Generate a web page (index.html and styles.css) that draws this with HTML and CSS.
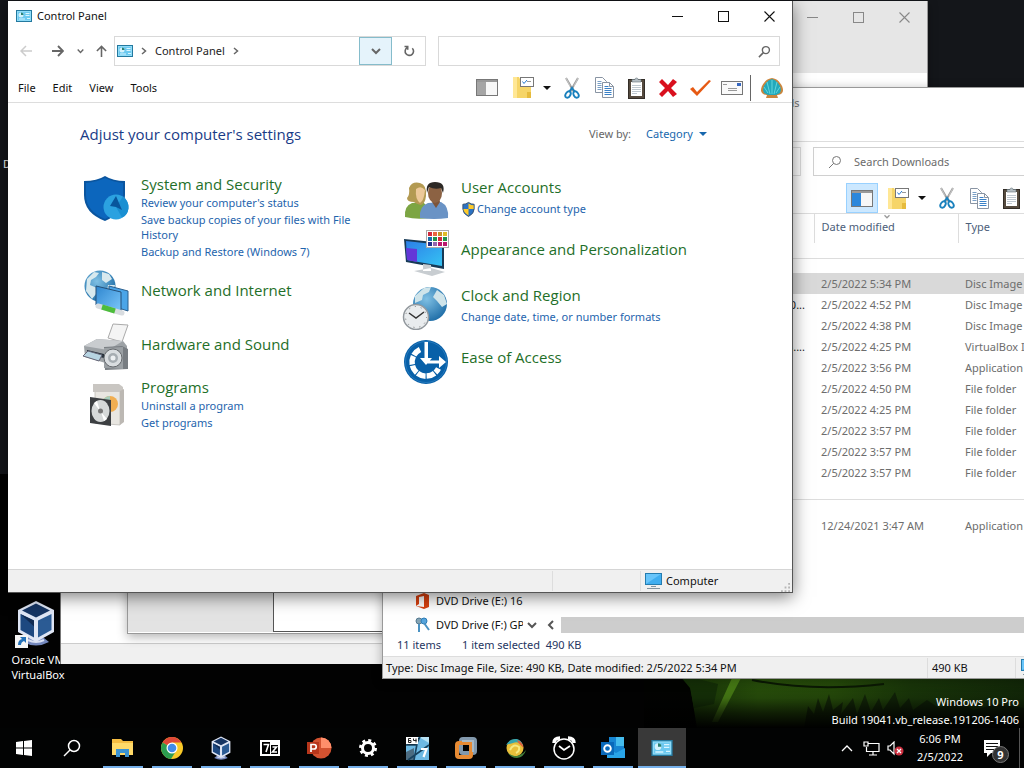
FILE: index.html
```html
<!DOCTYPE html>
<html lang="en">
<head>
<meta charset="utf-8">
<title>Control Panel</title>
<link rel="stylesheet" href="styles.css">
</head>
<body>
<svg class="defs" aria-hidden="true">
  <defs>
    <linearGradient id="gBlue" x1="0" y1="0" x2="1" y2="1"><stop offset="0" stop-color="#2f86cf"/><stop offset="1" stop-color="#7cc8fb"/></linearGradient>
    <linearGradient id="gScreen" x1="0" y1="0" x2="1" y2="1"><stop offset="0" stop-color="#2c7fe8"/><stop offset="1" stop-color="#35c3f3"/></linearGradient>
    <radialGradient id="gGlobe" cx=".4" cy=".35" r=".7"><stop offset="0" stop-color="#7fc0e4"/><stop offset="1" stop-color="#1d6ca6"/></radialGradient>
    <symbol id="i-cpl" viewBox="0 0 16 12"><rect x=".5" y=".5" width="15" height="11" fill="#8fdcf8" stroke="#24799f"/><rect x="2" y="2" width="12" height="8" fill="#6cc9f0"/><circle cx="5" cy="5" r="2.500" fill="#d4f2fc"/><path d="M5 5V2.500A2.500 2.500 0 0 1 7.500 5z" fill="#2a7f70"/><path d="M9.500 3.500h4M9.500 5.500h4M3 9h6M11 8.500h3" stroke="#d8f5ff"/></symbol>
    <symbol id="i-pane" viewBox="0 0 22 17"><rect x=".5" y=".5" width="21" height="16" fill="#f7f7f7" stroke="#777"/><rect x="1" y="1" width="20" height="2" fill="#999"/><rect x="1" y="3" width="9" height="13"/></symbol>
    <symbol id="i-folder" viewBox="0 0 22 23"><path d="M1 1h6l2 4h10v17H1z" fill="#f6d568"/><path d="M1 1h4v21H1z" fill="#ffe795"/><path d="M15 16h4v6h-4z" fill="#e6bb3d"/><rect x="8.500" y="1.500" width="13" height="9" fill="#fff" stroke="#777"/><path d="M10.500 5.500l1.500 2 3-3.500" fill="none" stroke="#2679cf"/><path d="M15 5.500h4" stroke="#999"/></symbol>
    <symbol id="i-cut" viewBox="0 0 16 22"><path d="M2 1l8 14M14 1L6 15" stroke="#9b9b9b" stroke-width="2"/><path d="M2 1l4 8M14 1l-4 8" stroke="#ddd" stroke-width=".7"/><ellipse cx="4" cy="17.500" rx="2.300" ry="3.500" transform="rotate(30 4 17.500)" fill="none" stroke="#1980bd" stroke-width="1.900"/><ellipse cx="12" cy="17.500" rx="2.300" ry="3.500" transform="rotate(-30 12 17.500)" fill="none" stroke="#1980bd" stroke-width="1.900"/><path d="M5 15l3-4 3 4" fill="none" stroke="#1980bd" stroke-width="2"/></symbol>
    <symbol id="i-copy" viewBox="0 0 19 21"><path d="M.5.5h7l4 4v11h-11z" fill="#fff" stroke="#8994a3"/><path d="M2.500 4.500h4M2.500 6.500h4M2.500 8.500h4M2.500 10.500h4M2.500 12.500h4" stroke="#799fc6"/><path d="M7.500 5.500h7l4 4v11h-11z" fill="#fff" stroke="#8994a3"/><path d="M14.500 5.500v4h4" fill="none" stroke="#8994a3"/><path d="M9.500 9.500h4M9.500 11.500h7M9.500 13.500h7M9.500 15.500h7M9.500 17.500h7" stroke="#3a81c7"/></symbol>
    <symbol id="i-paste" viewBox="0 0 17 22"><rect x=".5" y="2.500" width="16" height="19" fill="#554a3e" stroke="#332d27"/><rect x="3" y="5" width="11" height="14" fill="#fff"/><path d="M4 8.500h9M4 10.500h9M4 12.500h9M4 14.500h9M4 16.500h5" stroke="#bfc8d0"/><path d="M4 5V2.500h3a1.500 1.500 0 0 1 3 0h3V5z" fill="#b5bec4" stroke="#65737a" stroke-width=".6"/></symbol>
    <symbol id="i-pc" viewBox="0 0 17 16"><rect x=".5" y=".5" width="16" height="11" fill="#40aef0" stroke="#247caf"/><path d="M1 1h15L1 11z" fill="#68c5fa"/><path d="M6 13.500h5M2 15.500h13" stroke="#8294a0"/></symbol>
    <symbol id="i-search" viewBox="0 0 14 14"><circle cx="8.500" cy="5.500" r="3.800" fill="none" stroke="currentColor" stroke-width="1.500"/><path d="M5.800 8.200L1 13" stroke="currentColor" stroke-width="1.700"/></symbol>
    <symbol id="i-search-thin" viewBox="0 0 14 14"><circle cx="8.500" cy="5.500" r="4" fill="none" stroke="currentColor"/><path d="M5.700 8.300L1 13" stroke="currentColor"/></symbol>
    <symbol id="i-chev" viewBox="0 0 10 8"><path d="M1 2l4 4 4-4" fill="none" stroke="currentColor" stroke-width="2"/></symbol>
    <symbol id="i-right" viewBox="0 0 6 8"><path d="M1 1l3.500 3L1 7" fill="none" stroke="currentColor" stroke-width="1.500"/></symbol>
    <symbol id="i-min" viewBox="0 0 11 11"><path d="M0 5.500h11" stroke="currentColor"/></symbol>
    <symbol id="i-max" viewBox="0 0 11 11"><rect x=".5" y=".5" width="10" height="10" fill="none" stroke="currentColor"/></symbol>
    <symbol id="i-close" viewBox="0 0 11 11"><path d="M.5.5l10 10M10.500.5l-10 10" stroke="currentColor" stroke-width="1.100"/></symbol>
    <symbol id="i-vbox" viewBox="0 0 40 46"><path d="M12 38q8-5 16 0l5 4q-13 7-26 0z" fill="#7488bd"/><path d="M12 40q8 4 16 0" fill="none" stroke="#d9e0f2" stroke-width="2"/><path d="M20 1L38 10v22L20 42 2 32V10z" fill="#dfe6f5"/><path d="M20 3.500L34 10.500 20 17.500 6 10.500z" fill="#163563"/><path d="M4.500 14l13.500 6.500v17L4.500 30z" fill="#1d4880"/><path d="M35.500 14L22 20.500v17L35.500 30z" fill="#2b5b94"/><path d="M4.500 14l13.500 6.500v6z" fill="#102a52"/></symbol>
  </defs>
</svg>

<main class="desktop">
  <svg class="wallpaper" viewBox="0 0 380 60" preserveAspectRatio="none" aria-hidden="true">
    <defs>
      <linearGradient id="gGrass" x1="0" x2="1"><stop offset="0" stop-color="#000"/><stop offset=".1" stop-color="#1c3c08"/><stop offset=".3" stop-color="#2c570c"/><stop offset=".5" stop-color="#2a530b"/><stop offset=".7" stop-color="#1c3c0a"/><stop offset="1" stop-color="#142c09"/></linearGradient>
      <linearGradient id="gFade" x1="0" y1="0" x2="0" y2="1"><stop offset="0" stop-color="#000" stop-opacity="0"/><stop offset=".5" stop-color="#000" stop-opacity=".2"/><stop offset=".75" stop-color="#000" stop-opacity=".65"/><stop offset="1" stop-color="#000"/></linearGradient>
    </defs>
    <rect width="380" height="60" fill="url(#gGrass)"/>
    <path d="M0 0h36l10 16 3 20 4 24H0z" fill="#020301"/>
    <path d="M36 8q8 0 22 4l16 4-4 20-20 4-4-20z" fill="#173508"/>
    <path d="M88 10h9L74 54h-6z" fill="#4f8a17"/>
    <path d="M108 12q60 12 132 4" fill="none" stroke="#0c1c04" stroke-width="2"/>
    <path d="M160 60l4-22 6 8 4-16 5 14 6-18 4 16 10-8-2 12 12-16 4 16 8-20 6 18 8-14 4 12 12-18 5 16 9-10 4 12 14-10 12 8 20-8 14 10 24-6 27 4v20z" fill="#0a1406" opacity=".6"/>
    <rect width="380" height="60" fill="url(#gFade)"/>
  </svg>
  <span class="desk-clip">D</span>
  <a class="shortcut" href="#vbox">
    <svg class="shortcut-icon" viewBox="0 0 42 48"><use href="#i-vbox" x="1" width="40" height="46"/><rect x="0" y="35" width="13" height="13" fill="#f5f5f5"/><path d="M3 45q0-5 4-6l-2-2h6v6l-2-2q-3 1-3 4z" fill="#2471b8"/></svg>
    <span>Oracle VM VirtualBox</span>
  </a>
  <p class="build">Windows 10 Pro<br>Build 19041.vb_release.191206-1406</p>

  <section class="window win-blank"><div class="blank-body"></div><div class="blank-status"></div></section>

  <section class="window win-gray">
    <div class="gray-title">
      <button aria-label="Minimize"><svg><use href="#i-min"/></svg></button><button aria-label="Maximize"><svg><use href="#i-max"/></svg></button><button aria-label="Close"><svg><use href="#i-close"/></svg></button>
    </div>
    <div class="gray-body"><div class="gray-side"></div><div class="gray-main"></div></div>
  </section>

  <section class="window win-explorer">
    <header class="ex-title"><span>Downloads</span></header>
    <div class="ex-address"><div class="ex-path"></div><label class="ex-search"><svg><use href="#i-search-thin"/></svg><input type="text" placeholder="Search Downloads" aria-label="Search Downloads"></label></div>
    <div class="ex-tools">
      <button class="on" aria-label="Navigation pane"><svg class="ic-pane blue"><use href="#i-pane"/></svg></button>
      <button class="tool-folder" aria-label="Folder options"><svg class="ic-folder"><use href="#i-folder"/></svg><i class="caret"></i></button>
      <button aria-label="Cut"><svg class="ic-cut"><use href="#i-cut"/></svg></button>
      <button aria-label="Copy"><svg class="ic-copy"><use href="#i-copy"/></svg></button>
      <button aria-label="Paste"><svg class="ic-paste"><use href="#i-paste"/></svg></button>
    </div>
    <div class="ex-body">
      <nav class="ex-nav">
        <div class="ex-tree">
          <a href="#e"><svg viewBox="0 0 15 16"><path d="M1 3l8-3 5 2v12l-5 2-8-3 8 1V3L4 4v7l-3 2z" fill="#d9400f"/></svg><span>DVD Drive (E:) 16.0</span></a>
          <a href="#f"><svg viewBox="0 0 15 16"><circle cx="4" cy="4" r="3" fill="#86a5b5" stroke="#557a91"/><circle cx="9" cy="4" r="3" fill="#56a5dd" stroke="#2d7db7"/><path d="M4 7v8M9 6l5 7" stroke="#4a92c3" stroke-width="2"/></svg><span>DVD Drive (F:) GParted</span></a>
        </div>
        <button class="ex-down" aria-label="Scroll down"><svg><use href="#i-chev"/></svg></button>
      </nav>
      <div class="ex-files">
        <table>
          <colgroup><col class="c-name"><col class="c-date"><col class="c-type"></colgroup>
          <thead><tr><th></th><th><svg class="sort"><use href="#i-chev"/></svg>Date modified</th><th>Type</th></tr></thead>
          <tbody>
            <tr class="group"><td colspan="3"><hr></td></tr>
            <tr class="sel"><td></td><td>2/5/2022 5:34 PM</td><td>Disc Image File</td></tr>
            <tr><td>0...</td><td>2/5/2022 4:52 PM</td><td>Disc Image File</td></tr>
            <tr><td></td><td>2/5/2022 4:38 PM</td><td>Disc Image File</td></tr>
            <tr><td>5....</td><td>2/5/2022 4:25 PM</td><td>VirtualBox Image</td></tr>
            <tr><td></td><td>2/5/2022 3:56 PM</td><td>Application</td></tr>
            <tr><td></td><td>2/5/2022 4:50 PM</td><td>File folder</td></tr>
            <tr><td></td><td>2/5/2022 4:25 PM</td><td>File folder</td></tr>
            <tr><td></td><td>2/5/2022 3:57 PM</td><td>File folder</td></tr>
            <tr><td></td><td>2/5/2022 3:57 PM</td><td>File folder</td></tr>
            <tr><td></td><td>2/5/2022 3:57 PM</td><td>File folder</td></tr>
            <tr class="group later"><td colspan="3"><hr></td></tr>
            <tr><td></td><td>12/24/2021 3:47 AM</td><td>Application</td></tr>
          </tbody>
        </table>
        <div class="ex-scroll"><button aria-label="Scroll left"><svg><use href="#i-chev"/></svg></button><div class="thumb"></div></div>
      </div>
    </div>
    <div class="ex-count"><span>11 items</span><span>1 item selected&nbsp; 490 KB</span></div>
    <footer class="ex-status"><span class="grow">Type: Disc Image File, Size: 490 KB, Date modified: 2/5/2022 5:34 PM</span><span class="size">490 KB</span><span class="zone"><svg><use href="#i-pc"/></svg></span></footer>
  </section>

  <section class="window win-cpl">
    <header class="cp-title">
      <svg class="ic-cpl"><use href="#i-cpl"/></svg><span>Control Panel</span>
      <div class="caption"><button aria-label="Minimize"><svg><use href="#i-min"/></svg></button><button aria-label="Maximize"><svg><use href="#i-max"/></svg></button><button aria-label="Close"><svg><use href="#i-close"/></svg></button></div>
    </header>
    <div class="cp-nav">
      <div class="arrows">
        <button class="back" aria-label="Back"><svg viewBox="0 0 13 12"><path d="M6 1L1 6l5 5M1 6h11" fill="none" stroke="currentColor" stroke-width="1.500"/></svg></button>
        <button class="forward" aria-label="Forward"><svg viewBox="0 0 13 12"><path d="M7 1l5 5-5 5M12 6H1" fill="none" stroke="currentColor" stroke-width="1.900"/></svg></button>
        <button class="recent" aria-label="Recent locations"><svg><use href="#i-chev"/></svg></button>
        <button class="up" aria-label="Up"><svg viewBox="0 0 12 13"><path d="M1 6.500l5-5 5 5M6 1.500V13" fill="none" stroke="currentColor" stroke-width="1.700"/></svg></button>
      </div>
      <div class="path">
        <svg class="ic-cpl"><use href="#i-cpl"/></svg><svg class="crumb"><use href="#i-right"/></svg><a href="#cp">Control Panel</a><svg class="crumb"><use href="#i-right"/></svg>
        <button class="drop" aria-label="Previous locations"><svg><use href="#i-chev"/></svg></button>
        <button class="refresh" aria-label="Refresh"><svg viewBox="0 0 12 12"><path d="M9.300 3.200A4.200 4.200 0 1 1 4 2.700M1.500 1.500h3.200v3.200" fill="none" stroke="currentColor" stroke-width="1.600"/></svg></button>
      </div>
      <label class="search"><input type="text" aria-label="Search Control Panel"><svg><use href="#i-search"/></svg></label>
    </div>
    <div class="cp-menu">
      <button>File</button><button>Edit</button><button>View</button><button>Tools</button>
      <div class="cp-tools">
        <button aria-label="Navigation pane"><svg class="ic-pane"><use href="#i-pane"/></svg></button>
        <button class="tool-folder" aria-label="Folder options"><svg class="ic-folder"><use href="#i-folder"/></svg><i class="caret"></i></button>
        <button aria-label="Cut"><svg class="ic-cut"><use href="#i-cut"/></svg></button>
        <button aria-label="Copy"><svg class="ic-copy"><use href="#i-copy"/></svg></button>
        <button aria-label="Paste"><svg class="ic-paste"><use href="#i-paste"/></svg></button>
        <button aria-label="Delete"><svg class="ic-20" viewBox="0 0 20 20"><path d="M4 1l6 6 5-6 4 3-6 6 6 6-4 3-5-6-6 6-3-3 6-6-6-6z" fill="#d9101e"/></svg></button>
        <button aria-label="Properties"><svg class="ic-22" viewBox="0 0 22 18"><path d="M1 10l3-2 4 5L20 1l2 1L8 17z" fill="#e65a14"/></svg></button>
        <button aria-label="Rename"><svg class="ic-22" viewBox="0 0 22 18"><rect x=".5" y="2.500" width="21" height="13" fill="#fafafa" stroke="#777"/><path d="M2 5.500h4M7 9.500h9M7 11.500h9" stroke="#999"/><path d="M16 4h4v3h-4z" fill="#3868c0"/></svg></button>
        <button class="shell" aria-label="Classic Shell"><svg viewBox="0 0 24 22"><path d="M6 21l1-3q-5 0-6-4 0-5 3-8 2-4 8-5 6 1 8 5 3 3 3 8-1 4-6 4l1 3z" fill="#cb853d"/><path d="M8 18l-4-2-1-3q0-4 3-7 2-3 6-4 4 1 6 4 3 3 3 7l-1 3-4 2z" fill="#22a9bb"/><path d="M12 17V3M10 17L7 5M14 17l3-12M8 16L4 10M16 16l4-6" stroke="#62d6de"/></svg></button>
      </div>
    </div>
    <div class="cp-content">
      <div class="cp-head"><h1>Adjust your computer's settings</h1><div class="viewby"><span>View by:</span><button>Category <i class="caret"></i></button></div></div>
      <div class="cats">
        <div class="col">
          <article class="cat top">
            <svg viewBox="0 0 48 48"><path d="M23 2q8 5 20 5v14q0 17-20 26Q2 39 2 21V7q13 0 21-5z" fill="#0a559f"/><path d="M23 4q8 4 18 5v12q0 15-18 24Q4 37 4 21V9q11-1 19-5z" fill="#0c66bd"/><circle cx="34" cy="33" r="12.500" fill="#2ba1e0"/><path d="M34 33L41 22.500q6 5 5.500 12 -1 7-6.500 9z" fill="#198fd2"/><path d="M34 33l-6-1 6-10 6 14z" fill="#08559c"/></svg>
            <div><h2><a href="#sys">System and Security</a></h2><a href="#r">Review your computer's status</a><a href="#b">Save backup copies of your files with File History</a><a href="#w">Backup and Restore (Windows 7)</a></div>
          </article>
          <article class="cat">
            <svg viewBox="0 0 48 48"><circle cx="18" cy="17" r="15.500" fill="url(#gGlobe)"/><path d="M5 10l7-7 5 1-3 4-5 3-1 5 7 3-1 6-4 5-6-8zM20 3l7 2 3 5-6 4-4-3zM26 16l7 0-2 8-6-2z" fill="#d8e9ee"/><path d="M27 17l19 5v20l-19-6z" fill="#4ba5e8" stroke="#2b5f8d"/><path d="M14 17l25 6v20l-25-7z" fill="url(#gBlue)" stroke="#244f77"/><path d="M16 37l24 7" stroke="#d8dce0" stroke-width="5" stroke-linecap="round"/><path d="M20 38l13 4" stroke="#4dbd3c" stroke-width="5"/></svg>
            <div><h2><a href="#net">Network and Internet</a></h2></div>
          </article>
          <article class="cat">
            <svg viewBox="0 0 48 48"><path d="M26 15l5-14 15 1-6 17z" fill="#f4f4f4" stroke="#aaa"/><path d="M2 23l13-7 26 2 4 5v13l-18 5-24-7z" fill="#9da2a6"/><path d="M2 23l13-7 26 2-15 9z" fill="#c9cccf"/><path d="M5 27l17 4v4L5 31z" fill="#26313b"/><path d="M1 33l5-5 14 4-3 6z" fill="#b7d4e2" stroke="#667"/><path d="M22 24l18-1 6 3v20l-23 1z" fill="#787d82"/><path d="M22 25l19-1v22l-19-1z" fill="#9ba0a4"/><circle cx="31" cy="35" r="9" fill="#d9dde0" stroke="#65696d"/><circle cx="31" cy="35" r="5" fill="#a6adb2"/><circle cx="31" cy="35" r="2.500" fill="#edf0f2"/></svg>
            <div><h2><a href="#hw">Hardware and Sound</a></h2></div>
          </article>
          <article class="cat">
            <svg viewBox="0 0 48 48"><path d="M13 2l25 2v37l-25-2z" fill="#e8e6e1" stroke="#b8b5b0" stroke-width=".7"/><path d="M11 0h26l4 3v5H11z" fill="#c9c6c2"/><path d="M38 7l4-2v33l-4 3z" fill="#bcb8b3"/><circle cx="28" cy="20" r="8" fill="#f0ae51"/><path d="M28 20v-8a8 8 0 0 0-8 8z" fill="#a7cdbb"/><path d="M8 13l21 3v26L8 39z" fill="#3c3f42"/><ellipse cx="18.500" cy="27" rx="9" ry="11" fill="#d6d9d9"/><path d="M18 27l-6-8 3-2zM19 28l6 7-3 2z" fill="#fff"/><circle cx="18.500" cy="27" r="2.500" fill="#777"/></svg>
            <div><h2><a href="#prog">Programs</a></h2><a href="#u">Uninstall a program</a><a href="#g">Get programs</a></div>
          </article>
        </div>
        <div class="col">
          <article class="cat">
            <svg viewBox="0 0 48 48"><path d="M3 43q-1-11 7-14l11-1q6 5 6 16-12 2-24-1z" fill="#7ca543"/><path d="M7 14q3-7 11-5 7 2 6 13-1 8-5 9-5-1-7-3-7 0-7-4 3-3 2-10z" fill="#b39a52"/><path d="M14 15q5-4 9 1-1 11-5 13-5-4-4-14z" fill="#edc99a"/><path d="M18 44q-1-12 8-15l13-1q8 4 7 16-14 2-28 0z" fill="#6a93c5"/><path d="M30 28l4 6 4-6-1-4h-6z" fill="#7d5439"/><ellipse cx="33" cy="19" rx="7" ry="10" fill="#8c6243"/><path d="M25 19Q23 8 33 8q11 0 8 11l-2-5q-6 2-12-1z" fill="#2c2825"/></svg>
            <div class="pair"><h2><a href="#user">User Accounts</a></h2><a class="with-icon" href="#act"><svg viewBox="0 0 16 16"><path d="M8 1q3 2 6 2v5q0 5-6 8-6-3-6-8V3q3 0 6-2z" fill="#2b72c4" stroke="#39506c"/><path d="M8 2q3 2 5.500 2v4H8zM2.500 8H8v7q-5-3-5.500-7z" fill="#ffca28"/></svg>Change account type</a></div>
          </article>
          <article class="cat">
            <svg viewBox="0 0 48 48"><path d="M2 11l40 4v26L4 34z" fill="#173a56"/><path d="M4 13l36 4v21L5 32z" fill="url(#gScreen)"/><path d="M4 20l11 1v13L5 32z" fill="#6437d7"/><path d="M21 36l8 1v6h-8zM12 43l18 5 13-4-14-4z" fill="#c8cdd1"/><rect x="24.500" y="2.500" width="22" height="17" fill="#fff" stroke="#aaa"/><path d="M26 4h4v4h-4zM36 9h4v4h-4z" fill="#d12a3d"/><path d="M31 4h4v4h-4z" fill="#eb6640"/><path d="M36 4h4v4h-4z" fill="#c49425"/><path d="M41 4h4v4h-4z" fill="#e0bc27"/><path d="M26 9h4v4h-4z" fill="#176fab"/><path d="M31 9h4v4h-4zM41 9h4v4h-4z" fill="#20914b"/><path d="M26 14h4v4h-4z" fill="#20308c"/><path d="M31 14h4v4h-4z" fill="#9365af"/><path d="M36 14h4v4h-4zM41 14h4v4h-4z" fill="#ba176c"/></svg>
            <div><h2><a href="#app">Appearance and Personalization</a></h2></div>
          </article>
          <article class="cat">
            <svg viewBox="0 0 48 48"><circle cx="28" cy="22" r="17" fill="url(#gGlobe)"/><path d="M13 14l9-8 7-1-2 5-6 3-1 5-7 3zM35 8l7 5 3 9-5 3-5-6-4-4z" fill="#cfe4ea"/><circle cx="14" cy="35" r="12.500" fill="#e9ecee" stroke="#92989d" stroke-width="1.500"/><circle cx="14" cy="35" r="10.500" fill="none" stroke="#777" stroke-dasharray="1 5"/><path d="M7 31l7 5 8-6" fill="none" stroke="#333" stroke-width="1.500"/></svg>
            <div class="pair"><h2><a href="#clock">Clock and Region</a></h2><a href="#date">Change date, time, or number formats</a></div>
          </article>
          <article class="cat">
            <svg viewBox="0 0 48 48"><circle cx="24" cy="26" r="22" fill="#0860a8"/><circle cx="24" cy="26" r="20.500" fill="none" stroke="#2f83c4" stroke-width=".7"/><path d="M18 13.500A14 14 0 1 0 36.500 32.500" fill="none" stroke="#fff" stroke-width="5.500" stroke-dasharray="8.500 1"/><path d="M22.500 6h3.500v16h4l-6 7-6-7h4.500zM27 24.500h10V20l7 6-7 6v-4.500H25z" fill="#fff"/></svg>
            <div><h2><a href="#ease">Ease of Access</a></h2></div>
          </article>
        </div>
      </div>
    </div>
    <footer class="cp-status"><span class="grow"></span><span class="mid"></span><span class="zone"><svg class="ic-pc"><use href="#i-pc"/></svg>Computer</span><svg class="grip" viewBox="0 0 10 10"><path d="M8 0h2v2H8zM4 4h2v2H4zM8 4h2v2H8zM0 8h2v2H0zM4 8h2v2H4zM8 8h2v2H8z" fill="#b5b5b5"/></svg></footer>
  </section>
</main>

<footer class="taskbar">
  <button aria-label="Start"><svg viewBox="0 0 24 24"><path d="M4 6l7-1v6.500H4zM12 5l8-1v7.500h-8zM4 12.500h7V19l-7-1zM12 12.500h8V20l-8-1z" fill="#fff"/></svg></button>
  <button aria-label="Search"><svg viewBox="0 0 24 24"><circle cx="14" cy="10" r="5.500" fill="none" stroke="#fff" stroke-width="1.500"/><path d="M10 14l-6 6" stroke="#fff" stroke-width="1.500"/></svg></button>
  <div class="apps">
    <button class="run" aria-label="File Explorer"><svg viewBox="0 0 24 24"><path d="M1 3h9l2 2h10v13H1z" fill="#f5bd42"/><path d="M1 7h21v12H1z" fill="#ffda69"/><path d="M5 13h13v8h-4v-4H9v4H5z" fill="#3b93d3"/></svg></button>
    <button class="run" aria-label="Chrome"><svg viewBox="0 0 24 24"><circle cx="12" cy="12" r="11" fill="#f9c928"/><path d="M12 12L2.500 6.500A11 11 0 0 1 21.500 6.500H12z" fill="#df4838"/><path d="M2.500 6.500A11 11 0 0 0 11 23l5-8-4-3z" fill="#2c9d50"/><circle cx="12" cy="12" r="5.500" fill="#fff"/><circle cx="12" cy="12" r="4.300" fill="#428be8"/></svg></button>
    <button class="run" aria-label="VirtualBox"><svg viewBox="0 0 24 24"><use href="#i-vbox" width="24" height="24"/></svg></button>
    <button class="run" aria-label="7-Zip"><svg viewBox="0 0 24 24"><path d="M2 4h20v16H2z" fill="#fff"/><path d="M4 6h8v12H4zM13 9h7v9h-7z" fill="#000"/><path d="M5.500 8.500h5L8 16M14.500 11h4l-4 5h4.500" fill="none" stroke="#fff" stroke-width="1.600"/></svg></button>
    <button class="run" aria-label="PowerPoint"><svg viewBox="0 0 24 24"><circle cx="14" cy="12" r="10.500" fill="#d35230"/><path d="M14 1.500A10.500 10.500 0 0 1 24.500 12H14z" fill="#ff8f6b"/><rect y="6" width="12" height="12" fill="#b7361b"/><path d="M4 16V8.500h3a2 2 0 0 1 0 4.500H4" fill="none" stroke="#fff" stroke-width="1.700"/></svg></button>
    <button class="run" aria-label="Settings"><svg viewBox="0 0 24 24"><circle cx="12" cy="12" r="5.500" fill="none" stroke="#fff" stroke-width="3"/><circle cx="12" cy="12" r="7.500" fill="none" stroke="#fff" stroke-width="3" stroke-dasharray="2.900 2.990"/></svg></button>
    <button class="run" aria-label="Registry tool"><svg viewBox="0 0 24 24"><path d="M1 1h23v23H1z" fill="#6db9e3"/><path d="M14 1h10v6z" fill="#b8e3f5"/><path d="M1 24v-8l8-4v12z" fill="#4b6b80"/><path d="M1 9l10 0 4-8M3 24l21-15M12 8l-3 16" stroke="#17425e" stroke-width="1.600"/><path d="M1 1h12v7H1z" fill="#fff"/><path d="M6 2.500H3.500v4H6V4.500H4M8.500 2.500v2h3M11 2.500v4" fill="none" stroke="#222"/><path d="M16 13h5.500l-3 8" fill="none" stroke="#fff" stroke-width="2.200"/></svg></button>
    <button class="run" aria-label="VMware"><svg viewBox="0 0 24 24"><rect x="7" y="3" width="14" height="14" rx="2" fill="none" stroke="#8299ad" stroke-width="4"/><rect x="3" y="7" width="14" height="14" rx="2" fill="none" stroke="#e78b34" stroke-width="4"/><path d="M8 5h11v11" fill="none" stroke="#a9bac6" stroke-width="2"/></svg></button>
    <button class="run" aria-label="Media app"><svg viewBox="0 0 24 24"><circle cx="12" cy="12" r="8.500" fill="#e8bf3a"/><path d="M3 9q4-7 11-6 4 1 6 6-5-4-10-2-4 1-7 2z" fill="#36a5ae"/><path d="M14 4q6 2 6.500 8l-5-5z" fill="#df603d"/><path d="M5 17q6 5 12 2 4-2 6-5-2 7-9 8-6 0-9-5z" fill="#45803b"/><path d="M7 14q3-7 9-3 1 4-3 6" fill="none" stroke="#f6e982" stroke-width="2"/></svg></button>
    <button class="run" aria-label="Alarms &amp; Clock"><svg viewBox="0 0 24 24"><path d="M2 7q0-5 6-5M22 7q0-5-6-5" fill="none" stroke="#fff" stroke-width="3.500"/><circle cx="12" cy="13" r="10" fill="#000" stroke="#fff" stroke-width="1.500"/><path d="M7 10l5 4 6-4" fill="none" stroke="#fff" stroke-width="1.800"/></svg></button>
    <button class="run" aria-label="Outlook"><svg viewBox="0 0 24 24"><rect x="8" y="1" width="15" height="18" fill="#1685d2"/><path d="M15 1h8v9h-8z" fill="#45bdee"/><path d="M6 12l9 5 9-5v10H6z" fill="#29a4e8"/><rect y="6" width="13" height="13" fill="#0969ba"/><circle cx="6.500" cy="12.500" r="3.300" fill="none" stroke="#fff" stroke-width="1.900"/></svg></button>
    <button class="run active" aria-label="Control Panel"><svg viewBox="0 0 24 24"><use href="#i-cpl" x="1" y="4" width="22" height="16"/></svg></button>
  </div>
  <div class="tray">
    <button aria-label="Show hidden icons"><svg viewBox="0 0 12 8"><path d="M1 7l5-5 5 5" fill="none" stroke="#fff" stroke-width="1.300"/></svg></button>
    <button aria-label="Network"><svg class="net" viewBox="0 0 17 15"><path d="M5 2.500h11v8H3.500V6M10 11v3M6 14h8M1 1h4v4H1z" fill="none" stroke="#fff" stroke-width="1.200"/></svg></button>
    <button aria-label="Volume muted"><svg class="vol" viewBox="0 0 17 15"><path d="M1 5h2l4-4v12L3 9H1z" fill="none" stroke="#fff" stroke-width="1.200"/><circle cx="12" cy="10" r="4.500" fill="#cd3040"/><path d="M10 8l4 4M14 8l-4 4" stroke="#fff" stroke-width="1.300"/></svg></button>
    <button class="clock">6:06 PM<br>2/5/2022</button>
    <button class="note" aria-label="Notifications"><svg viewBox="0 0 20 18"><path d="M1 1h16v13H8l-4 4v-4H1z" fill="#fff"/><path d="M3 4.500h12M3 7.500h12M3 10.500h8" stroke="#111"/></svg><b>9</b></button>
    <i class="show-desktop"></i>
  </div>
</footer>
</body>
</html>
```
FILE: styles.css
```css
* { box-sizing: border-box; }
html, body { height: 100%; }
body {
  margin: 0;
  display: flex;
  flex-direction: column;
  overflow: hidden;
  background: #000;
  font: 11px/16px "Noto Sans", "Open Sans", sans-serif;
  color: #111;
}
button { margin: 0; padding: 0; border: 0; background: none; font: inherit; color: inherit; display: flex; align-items: center; justify-content: center; }
input { border: 0; outline: 0; padding: 0; background: none; font: inherit; min-width: 0; flex: 1; }
a { color: inherit; text-decoration: none; }
svg { display: block; flex: none; }
h1, h2, p { margin: 0; font-weight: 400; }
.defs { position: absolute; width: 0; height: 0; }
.grow { flex: 1; }

/* Desktop */
.desktop { position: relative; flex: 1; overflow: hidden; background: linear-gradient(#14161a 0 474px, #020202 474px); }
.wallpaper { position: absolute; right: 0; bottom: 0; width: 380px; height: 60px; }
.desk-clip { position: absolute; left: 3px; top: 156px; color: #fff; }
.shortcut { position: absolute; left: 8px; bottom: 46px; width: 60px; color: #fff; line-height: 15px; display: flex; flex-direction: column; gap: 4px; text-align: center; }
.shortcut-icon { width: 42px; height: 48px; margin-left: 7px; }
.build { position: absolute; right: 5px; bottom: -1px; color: #fff; text-align: right; line-height: 18px; }

.window { position: absolute; display: flex; flex-direction: column; overflow: hidden; background: #fff; }

.win-blank { left: 60px; right: 420px; top: 120px; bottom: 64px; border-left: 1px solid #777; }
.blank-body { flex: 1; }
.blank-status { height: 21px; background: #f0f0f0; border-top: 1px solid #ccc; }

.win-gray { left: 127px; right: 96px; top: 1px; bottom: 94px; border: 1px solid #999; border-top: 0; box-shadow: 0 3px 10px rgba(0,0,0,.3); }
.gray-title { height: 72px; background: #e6e6e6; display: flex; justify-content: flex-end; align-items: flex-start; color: #888; padding-top: 10px; }
.gray-title button { width: 46px; height: 12px; }
.gray-title svg, .caption svg { width: 11px; height: 11px; }
.gray-body { flex: 1; display: flex; padding-bottom: 1px; }
.gray-side { width: 145px; background: #e3e3e3; }
.gray-main { flex: 1; border: 1px solid #555; border-top: 0; border-right: 0; }

/* Explorer */
.win-explorer { left: 382px; right: -60px; top: 87px; bottom: 49px; border: 1px solid #999; box-shadow: 0 2px 10px rgba(0,0,0,.3); }
.ex-title { height: 54px; border-bottom: 1px solid #ddd; color: #777; padding: 7px 0 0 359px; }
.ex-address { height: 39px; display: flex; gap: 12px; padding: 5px 0 5px 200px; }
.ex-path { flex: 0 1 218px; border: 1px solid #ddd; background: #fff; }
.ex-search { flex: 1; display: flex; align-items: center; gap: 12px; padding-left: 14px; border: 1px solid #d0d0d0; color: #777; }
.ex-search svg { width: 14px; height: 14px; }
.ex-search input::placeholder { color: #6b6b6b; opacity: 1; }
.ex-tools { height: 33px; display: flex; align-items: center; padding: 2px 0 0 463px; border-bottom: 1px solid #ddd; }
.ex-tools button { width: 32px; height: 30px; }
.ex-tools .tool-folder, .cp-tools .tool-folder { width: 53px; padding-left: 4px; }
.ex-tools .on { background: #cce8ff; border: 1px solid #99d1ff; }
.ic-pane { width: 22px; height: 17px; fill: #a5a5a5; }
.ic-pane.blue { fill: #2b87dc; }
.ic-folder { width: 22px; height: 23px; }
.ic-cut { width: 16px; height: 22px; }
.ic-copy { width: 19px; height: 21px; }
.ic-paste { width: 17px; height: 22px; }
.caret { border: 4px solid transparent; border-top-color: currentColor; border-bottom: 0; }
.tool-folder { gap: 9px; }
.ex-body { flex: 1; display: flex; min-height: 0; }
.ex-nav { width: 157px; display: flex; align-items: flex-end; }
.ex-tree { flex: 1; min-width: 0; padding-left: 32px; display: flex; flex-direction: column; gap: 8px; }
.ex-tree a { display: flex; gap: 6px; height: 16px; align-items: center; }
.ex-tree svg { width: 15px; height: 16px; }
.ex-tree span { flex: 1; overflow: hidden; white-space: nowrap; }
.ex-down { width: 17px; height: 17px; color: #555; }
.ex-down svg { width: 10px; height: 8px; }
.ex-files { flex: 1; display: flex; flex-direction: column; justify-content: space-between; min-width: 0; padding-left: 1px; }
table { table-layout: fixed; width: 100%; border-collapse: collapse; color: #6d6d6d; }
.c-name { width: 273px; }
.c-date { width: 144px; }
th, td { padding: 0 0 0 7px; text-align: left; font-weight: 400; white-space: nowrap; overflow: hidden; }
th { height: 29px; padding-bottom: 3px; border-right: 1px solid #ddd; color: #4c607a; position: relative; }
.sort { position: absolute; left: 68px; top: 0; width: 8px; height: 5px; color: #999; }
td { height: 21px; line-height: 20px; }
td:first-child { text-align: right; padding-right: 9px; color: #222; }
.group td { height: 30px; padding: 0; }
.group.later td { height: 32px; }
hr { margin: 0; border: 0; border-top: 1px solid #ddd; }
.sel { background: #d9d9d9; }
.ex-scroll { height: 16px; display: flex; color: #555; }
.ex-scroll button { width: 20px; }
.ex-scroll svg { width: 10px; height: 8px; transform: rotate(90deg); }
.thumb { flex: 1; background: #cdcdcd; }
.ex-count { height: 23px; display: flex; align-items: center; gap: 21px; padding-left: 14px; color: #26365f; }
.ex-status { height: 22px; display: flex; align-items: center; background: #f0f0f0; border-top: 1px solid #ddd; padding-left: 3px; }
.ex-status span { height: 20px; line-height: 20px; }
.ex-status .size { width: 88px; border-left: 1px solid #ddd; padding-left: 4px; }
.ex-status .zone { width: 68px; border-left: 1px solid #ddd; padding: 1px 0 0 5px; }
.ex-status svg { width: 17px; height: 16px; }

/* Control Panel */
.win-cpl { left: 8px; right: 231px; top: 1px; bottom: 135px; border: 1px solid #555; border-width: 0 1px 1px 0; box-shadow: 0 4px 16px rgba(0,0,0,.5); }
.cp-title { height: 30px; display: flex; align-items: center; padding-left: 8px; gap: 5px; }
.ic-cpl { width: 16px; height: 12px; }
.caption { margin-left: auto; display: flex; }
.caption button { width: 46px; height: 30px; }
.cp-nav { height: 40px; display: flex; padding: 5px 12px; color: #666; }
.arrows { display: flex; width: 94px; }
.arrows button { justify-content: flex-start; }
.arrows svg { width: 13px; height: 12px; }
.arrows .back { width: 31px; color: #ccc; }
.arrows .forward { width: 26px; }
.arrows .recent { width: 18px; }
.arrows .recent svg { width: 7px; height: 6px; }
.path { flex: 1; display: flex; align-items: center; margin-right: 12px; border: 1px solid #d9d9d9; color: #222; padding-left: 2px; }
.crumb { width: 6px; height: 8px; margin: 0 8px; color: #666; }
.drop { width: 33px; height: 28px; margin-left: auto; background: #e5f3fb; border: 1px solid #85bccb; color: #666; }
.drop svg { width: 10px; height: 8px; }
.refresh { width: 33px; color: #666; }
.refresh svg { width: 12px; height: 12px; }
.search { flex: 0 1 342px; display: flex; align-items: center; border: 1px solid #d9d9d9; padding: 0 8px; }
.search svg { width: 13px; height: 13px; }
.cp-menu { height: 32px; display: flex; align-items: center; padding: 2px 0 0 10px; gap: 17px; border-bottom: 1px solid #ddd; }
.cp-tools { margin-left: auto; display: flex; align-items: center; }
.cp-tools button { width: 32px; height: 26px; }
.ic-20 { width: 20px; height: 20px; }
.ic-22 { width: 22px; height: 18px; }
.cp-tools .shell { width: 42px; border-left: 1px solid #666; margin-left: 2px; }
.shell svg { width: 24px; height: 22px; }
.cp-content { flex: 1; padding: 21px 40px 0 72px; }
.cp-head { display: flex; align-items: center; height: 20px; }
h1 { width: 509px; font: 15px/20px "Open Sans", "Noto Sans", sans-serif; color: #193b87; }
.viewby { display: flex; gap: 15px; color: #666; white-space: nowrap; }
.viewby button { color: #1767ad; gap: 6px; }
.cats { display: flex; margin-top: 30px; }
.col { flex: 0 0 320px; display: flex; flex-direction: column; gap: 6px; color: #1e64ad; }
.cat { display: flex; align-items: center; gap: 11px; padding-left: 2px; }
.cat.top { align-items: flex-start; }
.cat > svg { width: 48px; height: 48px; }
.cat > div { flex: 1; padding-bottom: 6px; min-width: 0; }
.cat.top > div { padding-bottom: 2px; }
.cat div > a { display: block; line-height: 15px; margin-bottom: 2px; max-width: 224px; }
h2 { font: 15px/20px "Open Sans", "Noto Sans", sans-serif; margin-bottom: 1px; color: #1f6f29; white-space: nowrap; }
.cat > .pair { padding-bottom: 0; }
.cat .pair > a { display: flex; align-items: center; gap: 1px; line-height: 20px; margin: 2px 0 0; }
.with-icon svg { width: 15px; height: 16px; }
.cp-status { height: 23px; display: flex; align-items: center; background: #f0f0f0; border-top: 1px solid #d5d5d5; }
.cp-status .mid { width: 88px; height: 20px; border-left: 1px solid #ddd; }
.cp-status .zone { width: 141px; height: 20px; display: flex; align-items: center; gap: 4px; padding-left: 4px; border-left: 1px solid #ddd; }
.ic-pc { width: 17px; height: 16px; }
.grip { width: 9px; height: 9px; margin: 0 2px 0 0; align-self: flex-end; }

/* Taskbar */
.taskbar { height: 40px; display: flex; background: #020303; color: #fff; }
.taskbar button { width: 48px; height: 40px; }
.taskbar > button svg, .apps svg { width: 24px; height: 24px; overflow: visible; }
.apps { display: flex; gap: 1px; margin-left: 3px; flex: 1; }
.apps .run { background: linear-gradient(#76b0ea, #76b0ea) center bottom / 40px 2px no-repeat; }
.apps .active { background-color: #393939; background-size: 48px 2px; }
.tray { display: flex; align-items: center; }
.tray button { width: 24px; }
.tray svg { width: 12px; height: 8px; }
.tray .net, .tray .vol { width: 17px; height: 15px; }
.tray .clock { width: 66px; line-height: 18px; }
.tray .note { width: 46px; padding-right: 6px; position: relative; }
.tray .note svg { width: 20px; height: 18px; }
.note b { position: absolute; left: 19px; top: 18px; width: 17px; height: 17px; border-radius: 50%; background: #333; border: 1px solid #777; font-size: 11px; line-height: 15px; }
.show-desktop { height: 40px; width: 5px; border-left: 1px solid #555; }
```
